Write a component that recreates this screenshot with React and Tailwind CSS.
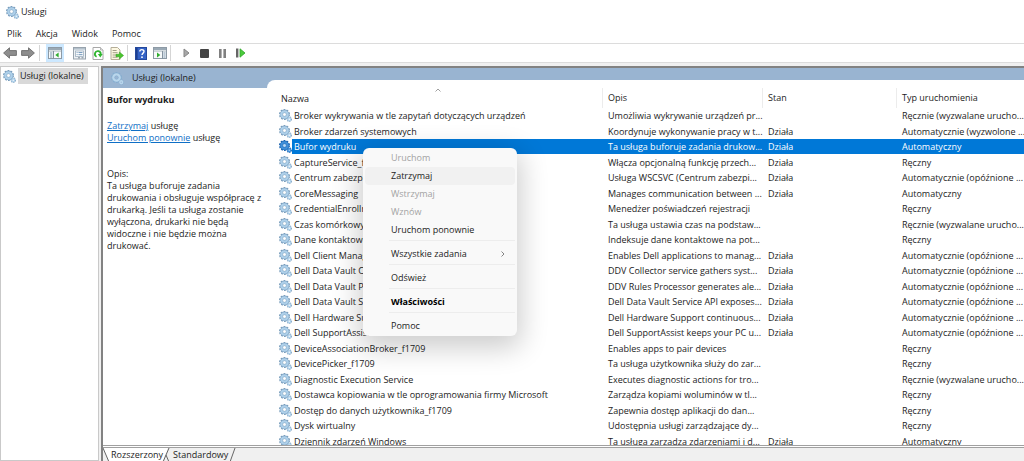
import React from 'react';

const AUTO = 'Automatyczny';
const MANUAL = 'Ręczny';
const TRIGGERED = 'Ręcznie (wyzwalane urucho...';
const DELAYED = 'Automatycznie (opóźnione ...';

const services = [
  { name: 'Broker wykrywania w tle zapytań dotyczących urządzeń', desc: 'Umożliwia wykrywanie urządzeń pr...', state: '', type: TRIGGERED },
  { name: 'Broker zdarzeń systemowych', desc: 'Koordynuje wykonywanie pracy w t...', state: 'Działa', type: 'Automatycznie (wyzwolone ...' },
  { name: 'Bufor wydruku', desc: 'Ta usługa buforuje zadania drukow...', state: 'Działa', type: AUTO, selected: true },
  { name: 'CaptureService_f1709', desc: 'Włącza opcjonalną funkcję przech...', state: 'Działa', type: MANUAL },
  { name: 'Centrum zabezpieczeń', desc: 'Usługa WSCSVC (Centrum zabezpi...', state: 'Działa', type: DELAYED },
  { name: 'CoreMessaging', desc: 'Manages communication between ...', state: 'Działa', type: AUTO },
  { name: 'CredentialEnrollment', desc: 'Menedżer poświadczeń rejestracji', state: '', type: MANUAL },
  { name: 'Czas komórkowy', desc: 'Ta usługa ustawia czas na podstaw...', state: '', type: TRIGGERED },
  { name: 'Dane kontaktowe_f1709', desc: 'Indeksuje dane kontaktowe na pot...', state: '', type: MANUAL },
  { name: 'Dell Client Management', desc: 'Enables Dell applications to manag...', state: 'Działa', type: DELAYED },
  { name: 'Dell Data Vault Collector', desc: 'DDV Collector service gathers syst...', state: 'Działa', type: DELAYED },
  { name: 'Dell Data Vault Processor', desc: 'DDV Rules Processor generates ale...', state: 'Działa', type: DELAYED },
  { name: 'Dell Data Vault Service API', desc: 'Dell Data Vault Service API exposes...', state: 'Działa', type: DELAYED },
  { name: 'Dell Hardware Support', desc: 'Dell Hardware Support continuous...', state: 'Działa', type: DELAYED },
  { name: 'Dell SupportAssist', desc: 'Dell SupportAssist keeps your PC u...', state: 'Działa', type: DELAYED },
  { name: 'DeviceAssociationBroker_f1709', desc: 'Enables apps to pair devices', state: '', type: MANUAL },
  { name: 'DevicePicker_f1709', desc: 'Ta usługa użytkownika służy do zar...', state: '', type: MANUAL },
  { name: 'Diagnostic Execution Service', desc: 'Executes diagnostic actions for tro...', state: '', type: TRIGGERED },
  { name: 'Dostawca kopiowania w tle oprogramowania firmy Microsoft', desc: 'Zarządza kopiami woluminów w tl...', state: '', type: MANUAL },
  { name: 'Dostęp do danych użytkownika_f1709', desc: 'Zapewnia dostęp aplikacji do dan...', state: '', type: MANUAL },
  { name: 'Dysk wirtualny', desc: 'Udostępnia usługi zarządzające dy...', state: '', type: MANUAL },
  { name: 'Dziennik zdarzeń Windows', desc: 'Ta usługa zarządza zdarzeniami i d...', state: 'Działa', type: AUTO },
];

const menuItems = [
  { label: 'Uruchom', disabled: true },
  { label: 'Zatrzymaj', active: true },
  { label: 'Wstrzymaj', disabled: true },
  { label: 'Wznów', disabled: true },
  { label: 'Uruchom ponownie' },
  { separator: true },
  { label: 'Wszystkie zadania', submenu: true },
  { separator: true },
  { label: 'Odśwież' },
  { separator: true },
  { label: 'Właściwości', bold: true },
  { separator: true },
  { label: 'Pomoc' },
];

const Gears = ({ selected, pale }) => {
  const edge = selected ? '#1a62ae' : pale ? '#86aed0' : '#7a9ebd';
  const body = selected ? '#3f8fd9' : pale ? '#b9d6ec' : '#aed0ea';
  const hole = selected ? '#bcdcf8' : pale ? '#9ab5d3' : '#fff';

  return (
    <svg viewBox="0 0 26 26" className="w-[13px] h-[13px] shrink-0" aria-hidden="true">
      <circle cx="11" cy="11" r="9" fill="none" stroke={edge} strokeWidth="4" strokeDasharray="3.4 2.25" />
      <circle cx="11" cy="11" r="6.4" fill="none" stroke={edge} strokeWidth="6" />
      <circle cx="11" cy="11" r="6.2" fill="none" stroke={body} strokeWidth="5" />
      <circle cx="11" cy="11" r="3.6" fill={hole} stroke={edge} strokeWidth="1" />
      <circle cx="20.5" cy="20.5" r="4" fill="none" stroke={edge} strokeWidth="3" strokeDasharray="2.2 1.4" />
      <circle cx="20.5" cy="20.5" r="2.8" fill={hole} stroke={body} strokeWidth="3" />
    </svg>
  );
};

const Arrow = ({ flip }) => (
  <svg viewBox="0 0 14 12" className={`w-3.5 h-3 ${flip ? '-scale-x-100' : ''}`} aria-hidden="true">
    <path d="M.6 6 6.5.8v2.8h6.9v4.8H6.5v2.8z" fill="#8e8e8e" stroke="#6c6c6c" strokeWidth="0.9" strokeLinejoin="round" />
  </svg>
);

const PaneIcon = ({ side }) => (
  <svg viewBox="0 0 14 12" className="w-3.5 h-3" aria-hidden="true">
    <rect x="0.5" y="0.5" width="13" height="11" fill="#f7f9fa" stroke="#8d9aa5" />
    <path d="M1 1h12v2.2H1z" fill="#9aa9b5" />
    <path d="M1 4.2h12" stroke="#a9b6c0" strokeWidth="0.8" />
    {side === 'left' ? (
      <>
        <path d="M5.5 4v8" stroke="#8493a0" />
        <path d="M2 6h2.4M2 8h2.4M2 10h2.4" stroke="#6d8da8" strokeWidth="0.9" />
        <path d="M10.6 5.6v4.8L7.3 8z" fill="#2fae2f" />
      </>
    ) : (
      <>
        <path d="M9.5 4v8" stroke="#8493a0" />
        <path d="M10.4 6h2.2M10.4 8h2.2M10.4 10h2.2" stroke="#6d8da8" strokeWidth="0.9" />
        <path d="M4 5.6v4.8L7.3 8z" fill="#2fae2f" />
      </>
    )}
  </svg>
);

const PropertiesIcon = () => (
  <svg viewBox="0 0 13 13" className="w-[13px] h-[13px]" aria-hidden="true">
    <rect x="0.5" y="0.5" width="12" height="11.5" fill="#eef2f5" stroke="#98a3ad" />
    <path d="M1 1h11v1.6H1z" fill="#b3c0cb" />
    <rect x="2.5" y="4" width="8" height="5.5" fill="#fff" stroke="#9fb0bf" strokeWidth="0.8" />
    <path d="M3.6 5.6h1M5.5 5.6h4M3.6 7.7h1M5.5 7.7h4" stroke="#5b87b0" strokeWidth="0.9" />
    <path d="M5 10.8h2M8.5 10.8h2" stroke="#7d8b97" />
  </svg>
);

const RefreshIcon = () => (
  <svg viewBox="0 0 12 13" className="w-3 h-[13px]" aria-hidden="true">
    <path d="M1 .5h7.5L11 3v9.5H1z" fill="#fff" stroke="#a8a8a8" />
    <path d="M8.5.5V3H11" fill="#e8e8e8" stroke="#a8a8a8" strokeWidth="0.8" />
    <path d="M4.6 9.7A2.9 2.9 0 1 1 8.7 7.4" fill="none" stroke="#2fb52f" strokeWidth="1.8" />
    <path d="M5.9 7h4.8L8.3 10.6z" fill="#2fb52f" />
  </svg>
);

const ExportIcon = () => (
  <svg viewBox="0 0 14 13" className="w-3.5 h-[13px]" aria-hidden="true">
    <path d="M1 .5h6.5L10 3v9.5H1z" fill="#fdf8e2" stroke="#b5ae98" />
    <path d="M2.6 3.5h4M2.6 5.7h5M2.6 8h3.5M2.6 10.2h5" stroke="#8c8672" strokeWidth="0.8" />
    <path d="M6 7.3h3.4V5l4.2 3.5-4.2 3.5V9.7H6z" fill="#4cc42f" stroke="#2f9a22" strokeWidth="0.5" />
  </svg>
);

const HelpIcon = () => (
  <svg viewBox="0 0 12 13" className="w-3 h-[13px]" aria-hidden="true">
    <rect x="0.5" y="0.5" width="11" height="12" fill="#3563c6" stroke="#24489c" />
    <path d="M1 1h1.6v11H1z" fill="#1d3f8f" />
    <path d="M4.8 4.6c0-2.6 4.2-2.6 4.2-.1 0 1.7-2 1.6-2 3.5" fill="none" stroke="#fff" strokeWidth="1.4" />
    <circle cx="7" cy="10.2" r="0.9" fill="#fff" />
  </svg>
);

const ToolButton = ({ label, active, children }) => (
  <button
    type="button"
    aria-label={label}
    className={`flex items-center justify-center w-[18px] h-[18px] ${active ? 'bg-[#cce8ff]' : ''}`}
  >
    {children}
  </button>
);

const Divider = () => <span className="w-px h-4 bg-[#d5d5d5]" />;

const Toolbar = () => (
  <div className="flex items-center h-5 pl-px border-y border-[#dcdcdc] bg-white">
    <ToolButton label="Wstecz"><Arrow /></ToolButton>
    <ToolButton label="Dalej"><Arrow flip /></ToolButton>
    <div className="flex items-center gap-1.5 pl-0.5">
      <Divider />
      <ToolButton label="Pokaż drzewo konsoli" active><PaneIcon side="left" /></ToolButton>
    </div>
    <div className="flex items-center pl-1.5 gap-px">
      <ToolButton label="Właściwości"><PropertiesIcon /></ToolButton>
      <ToolButton label="Odśwież"><RefreshIcon /></ToolButton>
      <ToolButton label="Eksportuj listę"><ExportIcon /></ToolButton>
      <Divider />
    </div>
    <div className="flex items-center pl-1 gap-px">
      <ToolButton label="Pomoc"><HelpIcon /></ToolButton>
      <ToolButton label="Pokaż okienko akcji"><PaneIcon side="right" /></ToolButton>
      <Divider />
    </div>
    <div className="flex items-center pl-1.5">
      <ToolButton label="Uruchom usługę">
        <svg viewBox="0 0 7 10" className="w-[7px] h-2.5"><path d="M1 1v8l5-4z" fill="#a8a8a8" stroke="#858585" /></svg>
      </ToolButton>
      <ToolButton label="Zatrzymaj usługę">
        <span className="w-[9px] h-[9px] rounded-[1px] bg-[#444]" />
      </ToolButton>
      <ToolButton label="Wstrzymaj usługę">
        <svg viewBox="0 0 7 9" className="w-[7px] h-[9px]"><path d="M0 0h2.6v9H0zM4.4 0H7v9H4.4z" fill="#808080" /></svg>
      </ToolButton>
      <ToolButton label="Uruchom ponownie usługę">
        <svg viewBox="0 0 11 10" className="w-[11px] h-2.5">
          <path d="M1 .5h2.4v9H1z" fill="#666" />
          <path d="M5 .8v8.4L10 5z" fill="#4ccb3c" stroke="#2fa52a" strokeWidth="0.8" />
        </svg>
      </ToolButton>
    </div>
  </div>
);

const DetailsPane = () => (
  <section className="w-[164px] shrink-0 pl-1 pt-1 leading-3">
    <h2 className="font-bold leading-4">Bufor wydruku</h2>
    <p className="pt-3">
      <a href="#stop" className="text-[#0f6fc6] underline">Zatrzymaj</a> usługę
    </p>
    <p>
      <a href="#restart" className="text-[#0f6fc6] underline">Uruchom ponownie</a> usługę
    </p>
    <p className="pt-6">Opis:</p>
    <p className="pr-1">
      Ta usługa buforuje zadania drukowania i obsługuje współpracę z drukarką. Jeśli ta usługa zostanie
      wyłączona, drukarki nie będą widoczne i nie będzie można drukować.
    </p>
  </section>
);

const ServiceRow = ({ service }) => {
  const fill = service.selected ? 'bg-[#0078d7] text-white' : '';

  return (
    <tr className="h-[15px] even:h-4" aria-selected={!!service.selected}>
      <td className="p-0">
        <div className="flex items-center h-full pl-3">
          <Gears selected={service.selected} />
          <span className={`flex-1 pl-0.5 h-[15px] ${fill}`}>{service.name}</span>
        </div>
      </td>
      <td className={`p-0 pl-1.5 ${fill}`}>{service.desc}</td>
      <td className={`p-0 pl-1.5 ${fill}`}>{service.state}</td>
      <td className={`p-0 pl-1.5 ${fill}`}>{service.type}</td>
    </tr>
  );
};

const ServiceTable = () => (
  <table className="w-full table-fixed border-collapse whitespace-nowrap leading-[15px]">
    <colgroup>
      <col className="w-[335px]" />
      <col className="w-40" />
      <col className="w-[134px]" />
      <col />
    </colgroup>
    <thead>
      <tr className="h-7 text-left">
        <th className="relative p-0 pt-2 pl-3.5 font-normal">
          Nazwa
          <svg viewBox="0 0 6 4" className="absolute left-1/2 top-2 w-1.5 h-1"><path d="M.5 3.5 3 1l2.5 2.5" fill="none" stroke="#888" strokeWidth="0.8" /></svg>
        </th>
        {['Opis', 'Stan', 'Typ uruchomienia'].map((title) => (
          <th key={title} className="p-0 pt-2 font-normal">
            <div className="pl-[5px] h-5 leading-5 border-l border-[#ececec]">{title}</div>
          </th>
        ))}
      </tr>
    </thead>
    <tbody>
      {services.map((service) => (
        <ServiceRow key={service.name} service={service} />
      ))}
    </tbody>
  </table>
);

const ContextMenu = () => (
  <div
    role="menu"
    className="absolute left-[363px] top-[148px] w-[154px] pt-px px-0.5 pb-px rounded-md bg-[#f9f9f9] shadow-[0_8px_28px_4px_rgba(0,0,0,0.2)]"
  >
    {menuItems.map((item, i) =>
      item.separator ? (
        <div key={i} className="h-1.5 pl-6 pt-px">
          <hr className="border-[#ededed]" />
        </div>
      ) : (
        <button
          key={i}
          type="button"
          role="menuitem"
          disabled={item.disabled}
          className={`flex items-center justify-between w-full h-[18px] pl-[26px] pr-2.5 leading-[14px] rounded-sm ${
            item.active ? 'bg-[#f1f1f1]' : ''
          } ${item.disabled ? 'text-[#a3a3a3]' : ''} ${item.bold ? 'font-bold text-black' : ''}`}
        >
          {item.label}
          {item.submenu && (
            <svg viewBox="0 0 4 6" className="w-1 h-1.5"><path d="M.5.5 3 3 .5 5.5" fill="none" stroke="#666" strokeWidth="0.8" /></svg>
          )}
        </button>
      )
    )}
  </div>
);

const ViewTabs = () => (
  <div role="tablist" className="relative flex shrink-0 gap-2.5 h-3.5 pl-2 border-t border-[#a0a0a0] bg-[#f0f0f0]">
    <svg viewBox="0 0 136 14" className="absolute left-0 top-0 w-[136px] h-3.5" aria-hidden="true">
      <path d="M0 0 6 14H59L65 0z" fill="#fff" />
      <path d="M0 0 6 14M60 14 66 0M63 7 66 14M127 14 132 0" fill="none" stroke="#666" />
    </svg>
    <button type="button" role="tab" aria-selected="true" className="relative leading-[14px]">Rozszerzony</button>
    <button type="button" role="tab" aria-selected="false" className="relative leading-[14px]">Standardowy</button>
  </div>
);

const App = () => {
  return (
    <div className="relative flex flex-col h-screen overflow-hidden bg-white text-[9px] leading-3 text-[#1c1c1c] font-['Open_Sans','Noto_Sans',sans-serif]">
      <header className="flex items-center gap-0.5 h-6 pl-1.5">
        <Gears />
        <h1>Usługi</h1>
      </header>
      <nav className="flex items-center gap-3.5 h-[19px] pl-[7px]">
        {['Plik', 'Akcja', 'Widok', 'Pomoc'].map((name) => (
          <button key={name} type="button">{name}</button>
        ))}
      </nav>
      <Toolbar />

      <div className="flex flex-1 min-h-0 pt-[3px] bg-[#f0f0f0]">
        <aside className="w-[99px] shrink-0 border border-[#c9c9c9] bg-white">
          <button type="button" className="flex items-center w-[87px] h-[18px] pl-0.5">
            <Gears />
            <span className="flex-1 ml-0.5 pl-0.5 h-4 leading-4 text-left bg-[#d9d9d9] whitespace-nowrap">Usługi (lokalne)</span>
          </button>
        </aside>

        <main className="flex flex-col flex-1 min-w-0 ml-0.5 border-l-2 border-t-2 border-[#828282] bg-white">
          <div className="flex flex-col flex-1 min-h-0 overflow-hidden mb-px border-b border-[#a0a0a0]">
            <div className="flex items-center gap-2 h-5 pl-2 shrink-0 bg-[#99b4d1]">
              <Gears pale />
              <span>Usługi (lokalne)</span>
            </div>
            <div className="flex flex-1 min-h-0">
              <DetailsPane />
              <div className="flex-1 min-w-0 -mt-2 rounded-tl-lg bg-white">
                <ServiceTable />
              </div>
            </div>
          </div>
          <ViewTabs />
        </main>
      </div>

      <ContextMenu />
    </div>
  );
};

export default App;
